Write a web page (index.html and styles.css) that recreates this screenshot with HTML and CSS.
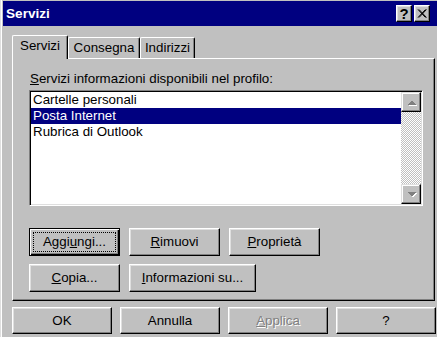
FILE: index.html
```html
<!DOCTYPE html>
<html lang="it">
<head>
    <meta charset="UTF-8">
    <title>Servizi</title>
    <link rel="stylesheet" href="styles.css">
</head>
<body>

<div class="window">
    <div class="titlebar">
        <span class="title">Servizi</span>
        <div class="title-buttons">
            <div class="tbtn help">?</div>
            <div class="tbtn close">
                <svg width="10" height="9" viewBox="0 0 10 9"><path d="M1 0.5 L8.5 8.5 M2 0.5 L9.5 8.5 M8.5 0.5 L1 8.5 M9.5 0.5 L2 8.5" stroke="#000" stroke-width="1"/></svg>
            </div>
        </div>
    </div>

    <div class="content">
        <div class="tabs">
            <div class="tab active">Servizi</div>
            <div class="tab tab-consegna">Consegna</div>
            <div class="tab tab-indirizzi">Indirizzi</div>
        </div>

        <div class="panel">
            <div class="label"><u>S</u>ervizi informazioni disponibili nel profilo:</div>

            <div class="listbox">
                <ul class="items">
                    <li>Cartelle personali</li>
                    <li class="selected">Posta Internet</li>
                    <li>Rubrica di Outlook</li>
                </ul>
                <div class="scrollbar">
                    <div class="sb-btn">
                        <svg width="18" height="18" viewBox="0 0 18 18" shape-rendering="crispEdges">
                            <polygon points="5,12 14,12 9.5,7.5" fill="#fff" transform="translate(1,1)"/>
                            <polygon points="5,12 14,12 9.5,7.5" fill="#808080"/>
                        </svg>
                    </div>
                    <div class="sb-track"></div>
                    <div class="sb-btn">
                        <svg width="18" height="18" viewBox="0 0 18 18" shape-rendering="crispEdges">
                            <polygon points="5,7 14,7 9.5,11.5" fill="#fff" transform="translate(1,1)"/>
                            <polygon points="5,7 14,7 9.5,11.5" fill="#808080"/>
                        </svg>
                    </div>
                </div>
            </div>

            <div class="btn-row">
                <div class="btn default"><span class="focus">Aggi<u>u</u>ngi...</span></div>
                <div class="btn"><u>R</u>imuovi</div>
                <div class="btn"><u>P</u>ropriet&agrave;</div>
            </div>
            <div class="btn-row">
                <div class="btn"><u>C</u>opia...</div>
                <div class="btn wide"><u>I</u>nformazioni su...</div>
            </div>
        </div>

        <div class="footer">
            <div class="btn big">OK</div>
            <div class="btn big">Annulla</div>
            <div class="btn big disabled"><u>A</u>pplica</div>
            <div class="btn big">?</div>
        </div>
    </div>
</div>

</body>
</html>
```

FILE: styles.css
```css
body {
    margin: 0;
    background-color: #c0c0c0;
}
.window {
    width: 437px;
    height: 337px;
    box-sizing: border-box;
    padding: 1px 0 0 2px;
    border-left: 1px solid #dfdfdf;
    box-shadow: inset 1px 0 #fff;
    background-color: #c0c0c0;
    overflow: hidden;
    font-family: "Liberation Sans", Arial, sans-serif;
    font-size: 13.33px;
    color: #000;
}
.titlebar {
    height: 25px;
    background-color: #000080;
    display: flex;
    align-items: center;
    justify-content: space-between;
    padding: 0 7px 0 3px;
}
.title {
    color: #fff;
    font-weight: bold;
    font-size: 13.6px;
}
.title-buttons {
    display: flex;
    gap: 2px;
}
.tbtn {
    width: 16px;
    height: 17px;
    box-sizing: border-box;
    border: 1px solid;
    border-color: #fff #000 #000 #fff;
    box-shadow: inset -1px -1px #808080, inset 1px 1px #dfdfdf;
    background-color: #c0c0c0;
    display: flex;
    justify-content: center;
    align-items: center;
    font-weight: bold;
    font-size: 15px;
    line-height: 15px;
}
.content {
    padding-left: 9px;
}
.tabs {
    display: flex;
    align-items: flex-end;
    height: 32px;
}
.tab {
    height: 21px;
    box-sizing: border-box;
    border-top: 1px solid #fff;
    border-left: 1px solid #fff;
    border-right: 1px solid #000;
    border-radius: 2px 2px 0 0;
    box-shadow: inset -1px 0 #808080;
    padding-top: 2px;
    line-height: 16px;
    text-align: center;
    background-color: #c0c0c0;
}
.tab.active {
    width: 56px;
    height: 24px;
    margin-bottom: -1px;
    position: relative;
    z-index: 1;
}
.tab-consegna {
    width: 72px;
}
.tab-indirizzi {
    width: 55px;
}
.panel {
    width: 423px;
    height: 243px;
    box-sizing: border-box;
    border: 1px solid;
    border-color: #fff #000 #000 #fff;
    box-shadow: inset -1px -1px #808080;
    padding: 12px 0 0 16px;
}
.label {
    margin: 0 0 3px 1px;
    line-height: 16px;
}
.listbox {
    width: 394px;
    height: 116px;
    box-sizing: border-box;
    border: 1px solid;
    border-color: #808080 #fff #fff #808080;
    box-shadow: inset 1px 1px #000, inset -1px -1px #dfdfdf;
    padding: 1px;
    background-color: #fff;
    display: flex;
    margin-bottom: 22px;
}
.items {
    flex: 1;
    list-style: none;
    margin: 0;
    padding: 0;
}
.items li {
    line-height: 16px;
    padding-left: 2px;
}
.items li.selected {
    background-color: #000080;
    color: #fff;
}
.scrollbar {
    width: 20px;
    display: flex;
    flex-direction: column;
}
.sb-track {
    flex: 1;
    background-image: conic-gradient(#fff 25%, #c0c0c0 0 50%, #fff 0 75%, #c0c0c0 0);
    background-size: 2px 2px;
}
.sb-btn {
    height: 20px;
    box-sizing: border-box;
    border: 1px solid;
    border-color: #dfdfdf #000 #000 #dfdfdf;
    box-shadow: inset -1px -1px #808080, inset 1px 1px #fff;
    background-color: #c0c0c0;
}
.sb-btn svg {
    display: block;
}
.btn-row {
    display: flex;
    gap: 9px;
    margin-bottom: 8px;
}
.btn {
    width: 91px;
    height: 28px;
    box-sizing: border-box;
    border: 1px solid;
    border-color: #fff #000 #000 #fff;
    box-shadow: inset -1px -1px #808080, inset 1px 1px #dfdfdf;
    background-color: #c0c0c0;
    display: flex;
    justify-content: center;
    align-items: center;
    line-height: 16px;
}
.btn.default {
    border-color: #000;
    box-shadow: inset 1px 1px #fff, inset -1px -1px #000, inset -2px -2px #808080;
    align-items: stretch;
}
.btn .focus {
    flex: 1;
    margin: 3px;
    border: 1px dotted #000;
    line-height: 18px;
    text-align: center;
}
.btn.wide {
    width: 127px;
}
.footer {
    display: flex;
    gap: 8px;
    margin-top: 6px;
}
.btn.big {
    width: 100px;
    height: 27px;
}
.btn.disabled {
    color: #808080;
    text-shadow: 1px 1px #fff;
}
u {
    text-underline-offset: 1px;
}
```
